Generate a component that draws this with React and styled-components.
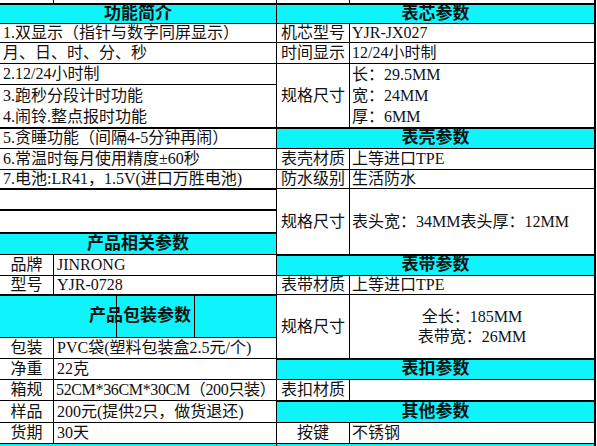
import React from "react";
import styled, { createGlobalStyle } from "styled-components";

const Global = createGlobalStyle`
  html, body { margin: 0; padding: 0; background: #fff; }
  body { font-family: "Liberation Serif", "Noto Sans CJK SC", serif; color: #111; }
`;

const Sheet = styled.div`
  display: grid;
  width: 594px;
  grid-template-columns: 53px 222px 72px 244px;
  grid-template-rows: 3px 19px 18px 20px 20px 20px 21px 20px 20px 18px 20px 22px 21px 20px 18px 20px 21px 20px 20px 20px 21px 20px 3px;
  gap: 1px;
  background: #000;
  border-right: 2px solid #000;
  font-size: 16px;
  line-height: 20px;
  overflow: hidden;
  height: 446px;
`;

const Cell = styled.div`
  grid-column: ${(p) => p.$col};
  grid-row: ${(p) => p.$row};
  background: #fff;
  display: flex;
  align-items: center;
  justify-content: ${(p) => (p.$center ? "center" : "flex-start")};
  padding: 0 ${(p) => (p.$pad != null ? p.$pad : 3)}px;
  letter-spacing: ${(p) => (p.$tight ? "-0.35px" : "normal")};
  box-shadow: ${(p) => (p.$thick ? "inset 0 1px 0 #000" : "none")};
  white-space: nowrap;
  overflow: hidden;
  min-width: 0;
`;

const Header = styled(Cell)`
  background: #0ef4fa;
  font-weight: 700;
  font-size: 17px;
  justify-content: center;
  box-shadow: inset 0 1px 0 #000;
`;

const PackHeader = styled(Header)`
  background-color: #0ef4fa;
  background-image: linear-gradient(#000, #000), linear-gradient(#000, #000);
  background-size: 1px 100%, 1px 100%;
  background-position: 116px 0, 194px 0;
  background-repeat: no-repeat;
  padding: 0 0 0 4px;
`;

const Strip = styled(Cell)`
  background: ${(p) => (p.$cyan ? "#0ef4fa" : "#fff")};
  padding: 0;
`;

const Stack = styled(Cell)`
  flex-direction: column;
  justify-content: center;
  align-items: ${(p) => (p.$center ? "center" : "flex-start")};
`;

const Line = styled.div`
  height: ${(p) => p.$h || 21}px;
  display: flex;
  align-items: center;
`;

const L = "1 / 3";
const R = "3 / 5";

export default function App() {
  return (
    <>
      <Global />
      <Sheet>
        <Strip $col="1" $row="1" />
        <Strip $col="2" $row="1" />
        <Strip $col="3" $row="1" />
        <Strip $col="4" $row="1" />

        {/* left: 功能简介 */}
        <Header $col={L} $row="2">功能简介</Header>
        <Cell $col={L} $row="3">1.双显示（指针与数字同屏显示）</Cell>
        <Cell $col={L} $row="4">月、日、时、分、秒</Cell>
        <Cell $col={L} $row="5">2.12/24小时制</Cell>
        <Stack $col={L} $row="6 / 8">
          <Line>3.跑秒分段计时功能</Line>
          <Line>4.闹铃.整点报时功能</Line>
        </Stack>
        <Cell $col={L} $row="8" $thick>5.贪睡功能（间隔4-5分钟再闹）</Cell>
        <Cell $col={L} $row="9">6.常温时每月使用精度±60秒</Cell>
        <Cell $col={L} $row="10">7.电池:LR41，1.5V(进口万胜电池)</Cell>
        <Cell $col={L} $row="11" $thick />
        <Cell $col={L} $row="12" $thick />

        <Header $col={L} $row="13">产品相关参数</Header>
        <Cell $col="1" $row="14" $center>品牌</Cell>
        <Cell $col="2" $row="14">JINRONG</Cell>
        <Cell $col="1" $row="15" $center>型号</Cell>
        <Cell $col="2" $row="15">YJR-0728</Cell>

        <PackHeader $col={L} $row="16 / 18">产品包装参数</PackHeader>
        <Cell $col="1" $row="18" $center>包装</Cell>
        <Cell $col="2" $row="18">PVC袋(塑料包装盒2.5元/个)</Cell>
        <Cell $col="1" $row="19" $center>净重</Cell>
        <Cell $col="2" $row="19">22克</Cell>
        <Cell $col="1" $row="20" $center>箱规</Cell>
        <Cell $col="2" $row="20" $pad={2} $tight>52CM*36CM*30CM（200只装）</Cell>
        <Cell $col="1" $row="21" $center>样品</Cell>
        <Cell $col="2" $row="21">200元(提供2只，做货退还)</Cell>
        <Cell $col="1" $row="22" $center>货期</Cell>
        <Cell $col="2" $row="22">30天</Cell>
        <Strip $col={L} $row="23" $cyan />

        {/* right: 表芯参数 */}
        <Header $col={R} $row="2">表芯参数</Header>
        <Cell $col="3" $row="3" $pad={4}>机芯型号</Cell>
        <Cell $col="4" $row="3" $pad={2}>YJR-JX027</Cell>
        <Cell $col="3" $row="4" $pad={4}>时间显示</Cell>
        <Cell $col="4" $row="4" $pad={2}>12/24小时制</Cell>
        <Cell $col="3" $row="5 / 8" $pad={4}>规格尺寸</Cell>
        <Stack $col="4" $row="5 / 8" $pad={2}>
          <Line>长：29.5MM</Line>
          <Line>宽：24MM</Line>
          <Line>厚：6MM</Line>
        </Stack>

        <Header $col={R} $row="8">表壳参数</Header>
        <Cell $col="3" $row="9" $pad={4}>表壳材质</Cell>
        <Cell $col="4" $row="9" $pad={2}>上等进口TPE</Cell>
        <Cell $col="3" $row="10" $pad={4}>防水级别</Cell>
        <Cell $col="4" $row="10" $pad={2}>生活防水</Cell>
        <Cell $col="3" $row="11 / 14" $pad={4}>规格尺寸</Cell>
        <Cell $col="4" $row="11 / 14" $pad={2}>表头宽：34MM表头厚：12MM</Cell>

        <Header $col={R} $row="14">表带参数</Header>
        <Cell $col="3" $row="15" $pad={4}>表带材质</Cell>
        <Cell $col="4" $row="15" $pad={2}>上等进口TPE</Cell>
        <Cell $col="3" $row="16 / 19" $pad={4}>规格尺寸</Cell>
        <Stack $col="4" $row="16 / 19" $center>
          <Line $h={20}>全长：185MM</Line>
          <Line $h={20}>表带宽：26MM</Line>
        </Stack>

        <Header $col={R} $row="19">表扣参数</Header>
        <Cell $col="3" $row="20" $pad={4}>表扣材质</Cell>
        <Cell $col="4" $row="20" />

        <Header $col={R} $row="21">其他参数</Header>
        <Cell $col="3" $row="22" $center>按键</Cell>
        <Cell $col="4" $row="22" $pad={2}>不锈钢</Cell>
        <Strip $col={R} $row="23" $cyan />
      </Sheet>
    </>
  );
}
